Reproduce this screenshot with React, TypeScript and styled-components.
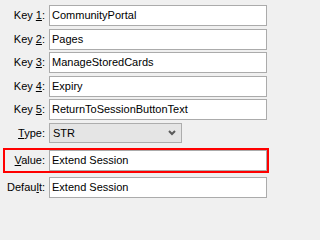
import styled, { createGlobalStyle } from "styled-components";

const GlobalStyle = createGlobalStyle`
	html, body {
		margin: 0;
		padding: 0;
		background: #f0f0f0;
	}
	body {
		font-family: "Liberation Sans", Arial, sans-serif;
		font-size: 11px;
		color: #000;
	}
`;

const Form = styled.div`
	display: flex;
	flex-direction: column;
	gap: 2.5px;
	width: 271px;
	height: 202px;
	box-sizing: border-box;
	padding: 5px 4px 0 5px;
`;

const Row = styled.div<{ $highlighted?: boolean }>`
	display: grid;
	grid-template-columns: 40px 1fr;
	column-gap: 4px;
	align-items: center;
	height: 21px;
	margin: ${(p) => (p.$highlighted ? "3.5px 0" : "0")};
	outline: ${(p) => (p.$highlighted ? "2px solid #ff0000" : "none")};
`;

const Label = styled.label`
	text-align: right;
	white-space: nowrap;
	line-height: 21px;

	u {
		text-decoration: underline;
		text-underline-offset: 1px;
	}
`;

const TextBox = styled.div`
	height: 21px;
	box-sizing: border-box;
	border: 1px solid #ababab;
	background: #fff;
	padding: 0 2px;
	line-height: 19px;
	white-space: nowrap;
	overflow: hidden;
`;

const Select = styled.div`
	display: flex;
	align-items: center;
	justify-content: space-between;
	width: 133px;
	height: 20px;
	box-sizing: border-box;
	border: 1px solid #adadad;
	background: #e5e5e5;
	padding: 0 5px 0 3px;
	line-height: 18px;
`;

const Chevron = () => (
	<svg width="8" height="6" viewBox="0 0 8 6">
		<path d="M1 1 L4 4 L7 1" fill="none" stroke="#5a5a5a" strokeWidth="2" />
	</svg>
);

const fields = [
	{ pre: "Key ", key: "1", post: ":", value: "CommunityPortal" },
	{ pre: "Key ", key: "2", post: ":", value: "Pages" },
	{ pre: "Key ", key: "3", post: ":", value: "ManageStoredCards" },
	{ pre: "Key ", key: "4", post: ":", value: "Expiry" },
	{ pre: "Key ", key: "5", post: ":", value: "ReturnToSessionButtonText" },
];

export default function App() {
	return (
		<>
			<GlobalStyle />
			<Form>
				{fields.map((f) => (
					<Row key={f.key}>
						<Label>
							{f.pre}
							<u>{f.key}</u>
							{f.post}
						</Label>
						<TextBox>{f.value}</TextBox>
					</Row>
				))}
				<Row>
					<Label>
						<u>T</u>ype:
					</Label>
					<Select>
						<span>STR</span>
						<Chevron />
					</Select>
				</Row>
				<Row $highlighted>
					<Label>
						<u>V</u>alue:
					</Label>
					<TextBox>Extend Session</TextBox>
				</Row>
				<Row>
					<Label>
						Defau<u>l</u>t:
					</Label>
					<TextBox>Extend Session</TextBox>
				</Row>
			</Form>
		</>
	);
}
